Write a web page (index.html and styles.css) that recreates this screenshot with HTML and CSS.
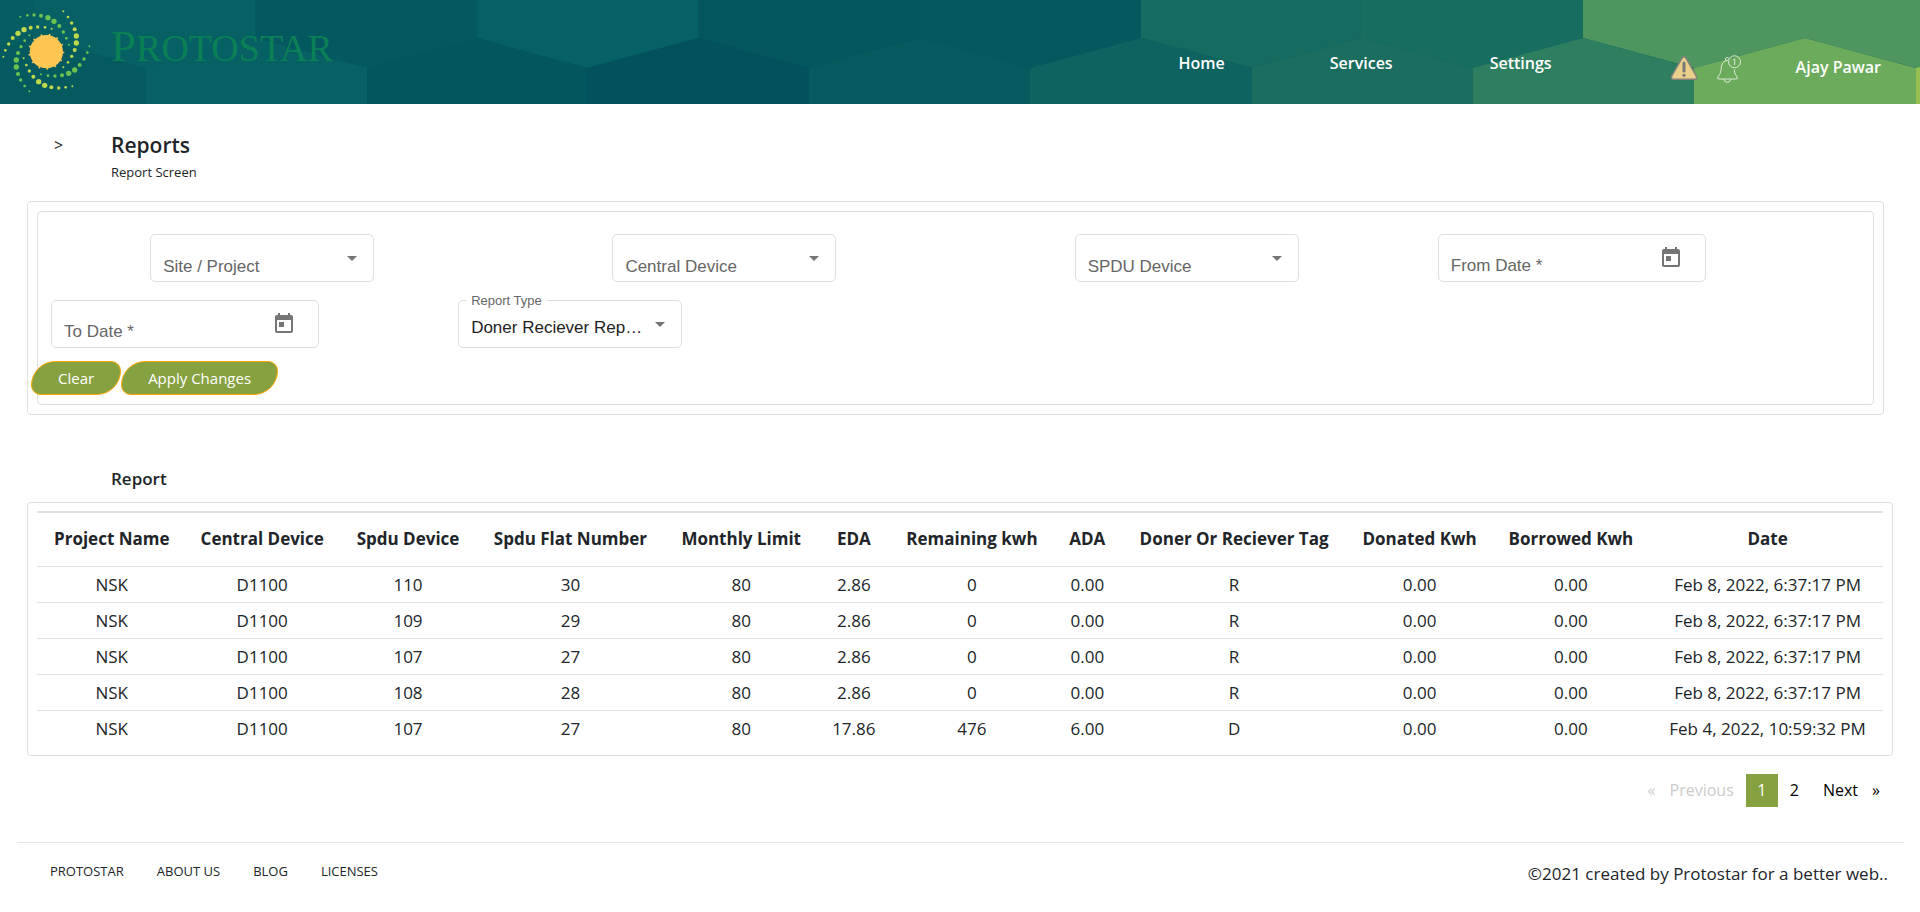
FILE: index.html
```html
<!DOCTYPE html>
<html lang="en">
<head>
<meta charset="utf-8">
<title>Protostar - Reports</title>
<link rel="stylesheet" href="styles.css">
</head>
<body>
<header class="topbar">
  <svg class="topbar-art" viewBox="0 0 1920 104" preserveAspectRatio="xMaxYMin slice" aria-hidden="true">
    <rect width="1920" height="104" fill="#055a5f"/>
    <path fill="#065d62" d="M0 0H34V38L0 48Z"/>
    <path fill="#066064" d="M34 0H255V38L146 68L34 38Z"/>
    <path fill="#04585f" d="M255 0H477V38L367 68L255 38Z"/>
    <path fill="#066166" d="M477 0H698V38L587 68L477 38Z"/>
    <path fill="#04575e" d="M698 0H920V38L809 68L698 38Z"/>
    <path fill="#05595e" d="M920 0H1141V38L1030 68L920 38Z"/>
    <path fill="#166b60" d="M1141 0H1362V38L1252 68L1141 38Z"/>
    <path fill="#176d60" d="M1362 0H1583V38L1473 68L1362 38Z"/>
    <path fill="#4e955f" d="M1583 0H1920V69L1805 38L1694 68L1583 38Z"/>
    <path fill="#055a60" d="M0 48L34 38L146 68V104H0Z"/>
    <path fill="#066064" d="M146 68L255 38L367 68V104H146Z"/>
    <path fill="#04565e" d="M367 68L477 38L587 68V104H367Z"/>
    <path fill="#02515d" d="M587 68L698 38L809 68V104H587Z"/>
    <path fill="#065b5f" d="M809 68L920 38L1030 68V104H809Z"/>
    <path fill="#0e6260" d="M1030 68L1141 38L1252 68V104H1030Z"/>
    <path fill="#1b6e5f" d="M1252 68L1362 38L1473 68V104H1252Z"/>
    <path fill="#2e7f60" d="M1473 68L1583 38L1694 68V104H1473Z"/>
    <path fill="#6cab5b" d="M1694 68L1805 38L1916 68V104H1694Z"/>
    <path fill="#96c050" d="M1916 68L1920 67V104H1916Z"/>
  </svg>
  <a class="brand" href="#">
    <svg class="brand-mark" viewBox="0 0 288 312" aria-hidden="true">
      <g fill="#6cc24f">
        <circle cx="61" cy="50" r="3"/><circle cx="82" cy="46" r="4"/><circle cx="102" cy="45" r="5"/><circle cx="123" cy="47" r="6"/><circle cx="144" cy="53" r="8"/><circle cx="162" cy="64" r="8"/><circle cx="178" cy="78" r="6"/><circle cx="190" cy="96" r="5"/><circle cx="199" cy="115" r="4"/><circle cx="207" cy="134" r="3"/>
        <circle cx="268" cy="139" r="3"/><circle cx="262" cy="158" r="4"/><circle cx="252" cy="177" r="5"/><circle cx="239" cy="195" r="6"/><circle cx="224" cy="210" r="8"/><circle cx="206" cy="220" r="8"/><circle cx="186" cy="226" r="6"/><circle cx="165" cy="228" r="5"/><circle cx="144" cy="227" r="4"/><circle cx="123" cy="223" r="3"/>
        <circle cx="88" cy="274" r="3"/><circle cx="74" cy="258" r="4"/><circle cx="62" cy="240" r="5"/><circle cx="54" cy="222" r="6"/><circle cx="49" cy="201" r="8"/><circle cx="49" cy="180" r="8"/><circle cx="54" cy="159" r="6"/><circle cx="63" cy="140" r="5"/><circle cx="74" cy="122" r="4"/><circle cx="88" cy="106" r="3"/>
      </g>
      <g fill="#bfd94c">
        <circle cx="190" cy="34" r="3"/><circle cx="204" cy="51" r="4"/><circle cx="215" cy="69" r="5"/><circle cx="224" cy="88" r="6"/><circle cx="229" cy="108" r="8"/><circle cx="229" cy="129" r="8"/><circle cx="224" cy="150" r="6"/><circle cx="215" cy="169" r="5"/><circle cx="204" cy="187" r="4"/><circle cx="190" cy="202" r="3"/>
        <circle cx="217" cy="259" r="3"/><circle cx="197" cy="262" r="4"/><circle cx="176" cy="264" r="5"/><circle cx="154" cy="262" r="6"/><circle cx="134" cy="256" r="8"/><circle cx="116" cy="245" r="8"/><circle cx="100" cy="230" r="6"/><circle cx="88" cy="213" r="5"/><circle cx="79" cy="195" r="4"/><circle cx="71" cy="175" r="3"/>
        <circle cx="10" cy="170" r="3"/><circle cx="16" cy="151" r="4"/><circle cx="26" cy="132" r="5"/><circle cx="38" cy="114" r="6"/><circle cx="54" cy="100" r="8"/><circle cx="72" cy="89" r="8"/><circle cx="92" cy="83" r="6"/><circle cx="113" cy="81" r="5"/><circle cx="135" cy="82" r="4"/><circle cx="155" cy="86" r="3"/>
      </g>
      <circle cx="139" cy="155" r="50" fill="#ffc752"/>
      <circle cx="139" cy="155" r="51" fill="none" stroke="#ffc752" stroke-width="6" stroke-dasharray="5 19.6"/>
    </svg>
    <span class="brand-name"><span class="brand-initial">P</span>ROTOSTAR</span>
  </a>
  <nav class="topnav">
    <a class="nav-home" href="#">Home</a>
    <a class="nav-services" href="#">Services</a>
    <a href="#">Settings</a>
  </nav>
  <div class="alerts">
    <button class="icon-btn" type="button" aria-label="Warnings">
      <svg width="28" height="26" viewBox="0 0 28 26">
        <path d="M12 3.200Q14 .4 16 3.200L26.200 21Q27.400 24 24.500 24.300H3.500Q.6 24 1.800 21Z" fill="#ead08b" stroke="#85807a" stroke-width="1.500"/>
        <path d="M14 8V16" stroke="#7b7878" stroke-width="3" stroke-linecap="round"/>
        <circle cx="14" cy="20.300" r="1.600" fill="#7b7878"/>
      </svg>
    </button>
    <button class="icon-btn" type="button" aria-label="Notifications">
      <svg width="26" height="28" viewBox="0 0 26 28" fill="none" stroke="#dcebd8" stroke-width="1">
        <path d="M12 5.500Q7 5.500 5.500 11C5 15 5 17.500 3.500 19.500L1.800 22Q1 24 3 24H20Q22 24 21.200 22L19.500 19.500Q18.300 17.500 18.300 14.500"/>
        <path d="M9.500 5.700Q8.700 2.500 11.500 2.500L13 3.300M8 24.300Q8.300 27.300 11.300 27.300Q14.300 27.300 14.700 24.300"/>
        <circle cx="18.500" cy="6.800" r="6"/>
        <path d="M17.200 5L18.700 4V10"/>
      </svg>
    </button>
  </div>
  <a class="user" href="#">Ajay Pawar</a>
</header>

<main class="page">
  <div class="page-head">
    <button class="expand" type="button" aria-label="Expand menu">&gt;</button>
    <div>
      <h1 class="page-title">Reports</h1>
      <p class="page-sub">Report Screen</p>
    </div>
  </div>

  <section class="card filter-card">
    <form class="card filters">
      <div class="filter-row">
        <div class="cell">
          <div class="field">
            <select class="control placeholder" aria-label="Site / Project"><option>Site / Project</option></select>
            <span class="caret"></span>
          </div>
        </div>
        <div class="cell">
          <div class="field">
            <select class="control placeholder" aria-label="Central Device"><option>Central Device</option></select>
            <span class="caret"></span>
          </div>
        </div>
        <div class="cell">
          <div class="field">
            <select class="control placeholder" aria-label="SPDU Device"><option>SPDU Device</option></select>
            <span class="caret"></span>
          </div>
        </div>
        <div class="cell-date">
          <div class="field field-date">
            <input class="control placeholder" type="text" placeholder="From Date *" aria-label="From Date">
            <button class="calendar" type="button" aria-label="Open calendar">
              <svg width="24" height="24" viewBox="0 0 24 24" fill="#757575"><path d="M19 3h-1V1h-2v2H8V1H6v2H5c-1.110 0-1.990.9-1.990 2L3 19c0 1.100.89 2 2 2h14c1.100 0 2-.9 2-2V5c0-1.100-.9-2-2-2zm0 16H5V8h14v11zM7 10h5v5H7z"/></svg>
            </button>
          </div>
        </div>
        <div class="cell-date">
          <div class="field field-date">
            <input class="control placeholder" type="text" placeholder="To Date *" aria-label="To Date">
            <button class="calendar" type="button" aria-label="Open calendar">
              <svg width="24" height="24" viewBox="0 0 24 24" fill="#757575"><path d="M19 3h-1V1h-2v2H8V1H6v2H5c-1.110 0-1.990.9-1.990 2L3 19c0 1.100.89 2 2 2h14c1.100 0 2-.9 2-2V5c0-1.100-.9-2-2-2zm0 16H5V8h14v11zM7 10h5v5H7z"/></svg>
            </button>
          </div>
        </div>
        <div class="cell">
          <div class="field">
            <label class="float-label" for="report-type">Report Type</label>
            <select class="control filled" id="report-type"><option>Doner Reciever Rep…</option></select>
            <span class="caret"></span>
          </div>
        </div>
      </div>
      <div class="actions">
        <button class="btn" type="button">Clear</button>
        <button class="btn" type="button">Apply Changes</button>
      </div>
    </form>
  </section>

  <h2 class="section-title">Report</h2>
  <section class="card table-card">
    <table class="report">
      <colgroup>
        <col class="c-project"><col class="c-central"><col class="c-spdu"><col class="c-flat"><col class="c-limit"><col class="c-eda"><col class="c-remain"><col class="c-ada"><col class="c-tag"><col class="c-donated"><col class="c-borrowed"><col class="c-date">
      </colgroup>
      <thead>
        <tr><th>Project Name</th><th>Central Device</th><th>Spdu Device</th><th>Spdu Flat Number</th><th>Monthly Limit</th><th>EDA</th><th>Remaining kwh</th><th>ADA</th><th>Doner Or Reciever Tag</th><th>Donated Kwh</th><th>Borrowed Kwh</th><th>Date</th></tr>
      </thead>
      <tbody>
        <tr><td>NSK</td><td>D1100</td><td>110</td><td>30</td><td>80</td><td>2.86</td><td>0</td><td>0.00</td><td>R</td><td>0.00</td><td>0.00</td><td>Feb 8, 2022, 6:37:17 PM</td></tr>
        <tr><td>NSK</td><td>D1100</td><td>109</td><td>29</td><td>80</td><td>2.86</td><td>0</td><td>0.00</td><td>R</td><td>0.00</td><td>0.00</td><td>Feb 8, 2022, 6:37:17 PM</td></tr>
        <tr><td>NSK</td><td>D1100</td><td>107</td><td>27</td><td>80</td><td>2.86</td><td>0</td><td>0.00</td><td>R</td><td>0.00</td><td>0.00</td><td>Feb 8, 2022, 6:37:17 PM</td></tr>
        <tr><td>NSK</td><td>D1100</td><td>108</td><td>28</td><td>80</td><td>2.86</td><td>0</td><td>0.00</td><td>R</td><td>0.00</td><td>0.00</td><td>Feb 8, 2022, 6:37:17 PM</td></tr>
        <tr><td>NSK</td><td>D1100</td><td>107</td><td>27</td><td>80</td><td>17.86</td><td>476</td><td>6.00</td><td>D</td><td>0.00</td><td>0.00</td><td>Feb 4, 2022, 10:59:32 PM</td></tr>
      </tbody>
    </table>
  </section>

  <nav class="pager" aria-label="Pagination">
    <span class="pager-off">«</span>
    <span class="pager-off pager-prev">Previous</span>
    <a class="pager-current" href="#" aria-current="page">1</a>
    <a class="pager-page" href="#">2</a>
    <a class="pager-next" href="#">Next</a>
    <a href="#" aria-label="Last page">»</a>
  </nav>
</main>

<footer class="footer">
  <nav class="footer-links">
    <a href="#">PROTOSTAR</a>
    <a href="#">ABOUT US</a>
    <a href="#">BLOG</a>
    <a href="#">LICENSES</a>
  </nav>
  <p class="copyright">©2021 created by Protostar for a better web..</p>
</footer>
</body>
</html>
```
FILE: styles.css
```css
* { box-sizing: border-box; }
body {
  margin: 0;
  background: #fff;
  color: #212529;
  font-family: "Open Sans", "Noto Sans", sans-serif;
  font-size: 16px;
  line-height: 24px;
}
a { color: inherit; text-decoration: none; }
button { margin: 0; padding: 0; border: 0; background: none; color: inherit; font: inherit; cursor: pointer; }

.topbar {
  position: relative;
  z-index: 0;
  display: flex;
  align-items: flex-start;
  height: 104px;
  padding-right: 39px;
  color: #fff;
  font-weight: 600;
}
.topbar-art { position: absolute; inset: 0; z-index: -1; width: 100%; height: 100%; }
.brand { display: flex; align-items: flex-start; gap: 15px; margin-right: auto; }
.brand-mark { display: block; width: 96px; height: 104px; }
.brand-name {
  padding-top: 18px;
  color: #0b8056;
  font-family: "Liberation Serif", serif;
  font-size: 38px;
  font-weight: 400;
  line-height: 56px;
}
.brand-initial { font-size: 45px; }
.topnav { display: flex; padding-top: 51px; }
.nav-home { margin-right: 105px; }
.nav-services { margin-right: 97px; }
.alerts { display: flex; align-items: flex-start; gap: 18px; padding-top: 55px; margin-left: 118px; }
.icon-btn, .icon-btn svg { display: block; }
.user { padding-top: 55px; margin-left: 54px; }

.page { padding: 25px 27px 0; }
.page-head { display: flex; align-items: flex-start; padding-left: 26px; gap: 47px; }
.expand { width: 11px; line-height: 32px; }
.page-title { margin: 0; font-size: 21px; font-weight: 600; line-height: 32px; }
.page-sub { margin: 0; font-size: 13px; line-height: 22px; }

.card { border: 1px solid #dfdfdf; border-radius: 4px; }
.filter-card { margin: 18px 9px 0 0; padding: 9px; }
.filters { padding: 22px 0 9px; }
.filter-row { display: flex; flex-wrap: wrap; row-gap: 18px; margin: 0 -7px; }
.cell { display: flex; justify-content: center; flex: 0 0 25%; }
.cell-date { flex: none; padding: 0 20px; }
.field { position: relative; width: 224px; height: 48px; border: 1px solid #dfdfdf; border-radius: 5px; }
.field-date { width: 268px; }
.control {
  display: block;
  width: 100%;
  height: 100%;
  padding: 16px 40px 0 12px;
  border: 0;
  outline: 0;
  appearance: none;
  background: none;
  color: #222;
  font: 17px "Liberation Sans", Arial, sans-serif;
}
.control.placeholder, .control::placeholder { color: #666; opacity: 1; }
.control.filled { padding: 7px 28px 0 12px; }
.caret {
  position: absolute;
  top: 21px;
  right: 16px;
  border: 5px solid transparent;
  border-top-color: #757575;
  border-bottom: 0;
  pointer-events: none;
}
.calendar { position: absolute; top: 11px; right: 22px; }
.calendar svg { display: block; }
.float-label {
  position: absolute;
  top: -8px;
  left: 7px;
  padding: 0 5px;
  background: #fff;
  color: #666;
  font: 13px/16px "Liberation Sans", Arial, sans-serif;
}
.actions { display: flex; margin: 13px 0 0 -7px; }
.btn {
  height: 34px;
  padding: 0 26px;
  border: 1px solid #ffa500;
  border-radius: 30px 12px;
  background: #86a140;
  color: #fff;
  font-size: 15px;
}

.section-title {
  margin: 52px 0 11px 84px;
  font-size: 17px;
  font-weight: 600;
  line-height: 24px;
}
.table-card { padding: 8px 9px 9px; }
.report { width: 100%; border-collapse: collapse; table-layout: fixed; text-align: center; font-size: 17px; }
.report th { height: 54px; padding: 0; border-top: 2px solid #dee2e6; font-weight: 700; white-space: nowrap; }
.report td { height: 36px; padding: 1px 0 0; border-top: 1px solid #dee2e6; white-space: nowrap; }
.c-project { width: 8.1%; }
.c-central { width: 8.2%; }
.c-spdu { width: 7.6%; }
.c-flat { width: 10%; }
.c-limit { width: 8.5%; }
.c-eda { width: 3.7%; }
.c-remain { width: 9.1%; }
.c-ada { width: 3.4%; }
.c-tag { width: 12.5%; }
.c-donated { width: 7.6%; }
.c-borrowed { width: 8.8%; }
.c-date { width: 12.5%; }

.pager { display: flex; justify-content: flex-end; margin: 18px 13px 0 0; color: #000; line-height: 33px; }
.pager-off { color: #ccc; }
.pager-prev { margin: 0 12px 0 14px; }
.pager-current { width: 32px; background: #86a140; color: #fff; text-align: center; }
.pager-page { margin: 0 24px 0 12px; }
.pager-next { margin-right: 14px; }

.footer {
  display: flex;
  justify-content: space-between;
  margin: 35px 16px 0 17px;
  padding: 16px 16px 0 33px;
  border-top: 1px solid #e5e5e5;
}
.footer-links { display: flex; gap: 33px; font-size: 13px; }
.copyright { margin: 0; padding-top: 3px; font-size: 17px; }
```
